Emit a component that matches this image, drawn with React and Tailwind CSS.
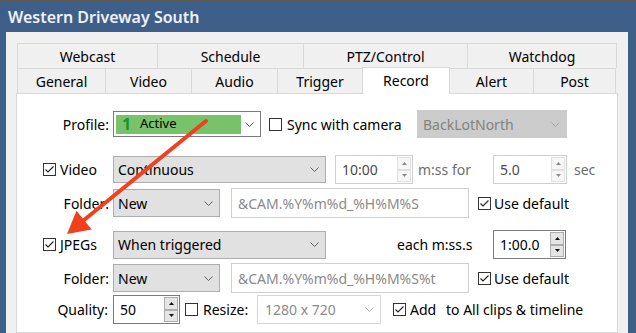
import React from "react";

const topTabs = [
  ["Webcast", "w-[140px]"],
  ["Schedule", "w-[146px]"],
  ["PTZ/Control", "w-[164px]"],
  ["Watchdog", "w-[150px] border-r"],
];

const bottomTabs = [
  ["General", "w-[88px] border-l"],
  ["Video", "w-[86px] border-l"],
  ["Audio", "w-[86px] border-l"],
  ["Trigger", "w-[85px] border-l"],
  ["Record", ""],
  ["Alert", "w-[83px]"],
  ["Post", "w-[83px] border-l border-r"],
];

function Check({ on }) {
  return (
    <span className="flex h-[13px] w-[13px] shrink-0 items-center justify-center border border-[#333] bg-white">
      {on && (
        <svg width="11" height="11" viewBox="0 0 11 11">
          <polyline points="1.5,5.5 4,8 9.5,2.5" fill="none" stroke="#222" strokeWidth="1.1" />
        </svg>
      )}
    </span>
  );
}

function Chevron({ color = "#606060" }) {
  return (
    <svg width="9" height="5" viewBox="0 0 9 5" className="shrink-0">
      <polyline points="0.5,0.5 4.5,4.5 8.5,0.5" fill="none" stroke={color} strokeWidth="1" />
    </svg>
  );
}

function Combo({ className, text }) {
  return (
    <div className={`flex shrink-0 items-center justify-between border border-[#adadad] bg-[#e1e1e1] pl-[4px] pr-[6px] ${className}`}>
      <span>{text}</span>
      <Chevron />
    </div>
  );
}

function Arrow({ up, dark }) {
  return (
    <div
      className={`flex flex-1 items-center justify-center border ${
        dark ? "border-[#adadad] bg-[#e5e5e5]" : "border-[#e0e0e0] bg-[#f7f7f7]"
      }`}
    >
      <svg width="5" height="3" viewBox="0 0 5 3">
        <polygon points={up ? "0,3 5,3 2.5,0" : "0,0 5,0 2.5,3"} fill={dark ? "#111" : "#8a8a8a"} />
      </svg>
    </div>
  );
}

function Spin({ className, text, dark }) {
  return (
    <div
      className={`flex h-[29px] shrink-0 border bg-white ${
        dark ? "border-[#7a7a7a] text-black" : "border-[#cfcfcf] text-[#4a4a4a]"
      } ${className}`}
    >
      <span className="flex flex-1 items-center pl-[6px]">{text}</span>
      <div className="flex w-[16px] flex-col p-[1px]">
        <Arrow up dark={dark} />
        <Arrow dark={dark} />
      </div>
    </div>
  );
}

function Path({ text }) {
  return (
    <div className="ml-[11px] flex h-[30px] w-[238px] shrink-0 items-center border border-[#d0d0d0] bg-white pl-[6px] text-[#8a8a8a]">
      {text}
    </div>
  );
}

export default function App() {
  return (
    <div className="relative h-[333px] w-[636px] overflow-hidden bg-[#3f5f8b] font-['Noto_Sans',sans-serif] text-[14px] text-black">
      <div className="h-[1px] bg-[#5d5b4f]" />
      <div className="flex h-[31px] items-center pl-[8px] text-[16px] font-semibold text-[#eef2f7]">
        Western Driveway South
      </div>

      <div className="ml-[6px] h-[301px] w-[622px] bg-[#f0f0f0] pl-[10px] pt-[11px]">
        <div className="ml-[1px] w-[600px]">
          <div className="flex h-[25px]">
            {topTabs.map(([t, c]) => (
              <div key={t} className={`flex items-center justify-center border-l border-t border-[#d9d9d9] bg-[#f0f0f0] pt-[1px] ${c}`}>
                {t}
              </div>
            ))}
          </div>
          <div className="flex h-[25px]">
            {bottomTabs.map(([t, c]) =>
              t === "Record" ? (
                <div
                  key={t}
                  className="relative z-10 -mt-[1px] flex h-[27px] w-[88px] items-center justify-center self-start border-l border-r border-t border-[#d9d9d9] bg-white pb-[2px]"
                >
                  {t}
                </div>
              ) : (
                <div key={t} className={`flex items-center justify-center border-t border-[#d9d9d9] bg-[#f0f0f0] ${c}`}>
                  {t}
                </div>
              )
            )}
          </div>
        </div>

        <div className="h-[240px] w-[602px] border border-[#d9d9d9] bg-white pl-[26px] pt-[16px]">
          {/* profile */}
          <div className="flex h-[28px] items-center">
            <span className="w-[70px] shrink-0 pr-[4px] text-right">Profile:</span>
            <div className="flex h-[26px] w-[148px] shrink-0 items-center border border-[#7a7a7a] bg-white p-[2px] pr-[6px]">
              <div className="flex h-[19px] w-[125px] items-center bg-[#78c26a] pl-[6px]">
                <span className="w-[18px] text-[16px] font-bold leading-none text-[#16962a]">1</span>
                <span className="text-[13px]">Active</span>
              </div>
              <div className="flex flex-1 justify-end">
                <Chevron color="#555" />
              </div>
            </div>
            <span className="ml-[8px]">
              <Check />
            </span>
            <span className="ml-[5px] w-[130px] shrink-0">Sync with camera</span>
            <div className="flex h-[28px] w-[150px] shrink-0 items-center justify-between border border-[#cccccc] bg-[#cccccc] pl-[5px] pr-[6px] text-[#838383]">
              <span>BackLotNorth</span>
              <Chevron color="#a3a3a3" />
            </div>
          </div>

          {/* video */}
          <div className="mt-[17px] flex h-[29px] items-center">
            <Check on />
            <span className="ml-[4px] w-[53px] shrink-0">Video</span>
            <Combo className="h-[27px] w-[213px]" text="Continuous" />
            <Spin className="ml-[9px] w-[78px]" text="10:00" />
            <span className="ml-[5px] w-[75px] shrink-0 text-[#6d6d6d]">m:ss for</span>
            <Spin className="w-[74px]" text="5.0" />
            <span className="ml-[7px] text-[#6d6d6d]">sec</span>
          </div>

          {/* folder */}
          <div className="mt-[4px] flex h-[30px] items-center">
            <span className="w-[70px] shrink-0 pr-[4px] text-right">Folder:</span>
            <Combo className="h-[28px] w-[107px]" text="New" />
            <Path text="&CAM.%Y%m%d_%H%M%S" />
            <span className="ml-[9px]">
              <Check on />
            </span>
            <span className="ml-[3px]">Use default</span>
          </div>

          {/* jpegs */}
          <div className="mt-[12px] flex h-[29px] items-center">
            <Check on />
            <span className="ml-[4px] w-[53px] shrink-0">JPEGs</span>
            <Combo className="h-[28px] w-[213px]" text="When triggered" />
            <span className="ml-[71px] w-[96px] shrink-0">each m:ss.s</span>
            <Spin className="w-[73px]" text="1:00.0" dark />
          </div>

          {/* folder 2 */}
          <div className="mt-[4px] flex h-[30px] items-center">
            <span className="w-[70px] shrink-0 pr-[4px] text-right">Folder:</span>
            <Combo className="h-[28px] w-[107px]" text="New" />
            <Path text="&CAM.%Y%m%d_%H%M%S%t" />
            <span className="ml-[9px]">
              <Check on />
            </span>
            <span className="ml-[3px]">Use default</span>
          </div>

          {/* quality */}
          <div className="mt-[2px] flex h-[29px] items-center">
            <span className="w-[70px] shrink-0 pr-[5px] text-right">Quality:</span>
            <Spin className="w-[67px]" text="50" dark />
            <span className="ml-[5px]">
              <Check />
            </span>
            <span className="ml-[5px] w-[54px] shrink-0">Resize:</span>
            <div className="flex h-[29px] w-[124px] shrink-0 items-center justify-between border border-[#d6d6d6] bg-white pl-[7px] pr-[6px] text-[#8a8a8a]">
              <span>1280 x 720</span>
              <Chevron color="#b5b5b5" />
            </div>
            <span className="ml-[12px]">
              <Check on />
            </span>
            <span className="ml-[4px] w-[36px] shrink-0">Add</span>
            <span>to All clips &amp; timeline</span>
          </div>
        </div>
      </div>

      <svg className="pointer-events-none absolute left-0 top-0" width="636" height="333" viewBox="0 0 636 333">
        <line x1="206" y1="121" x2="84" y2="220" stroke="#f0401e" strokeWidth="4" strokeLinecap="round" />
        <polygon points="67,234 76.5,210.8 91.7,229.4" fill="#f0401e" />
      </svg>
    </div>
  );
}
